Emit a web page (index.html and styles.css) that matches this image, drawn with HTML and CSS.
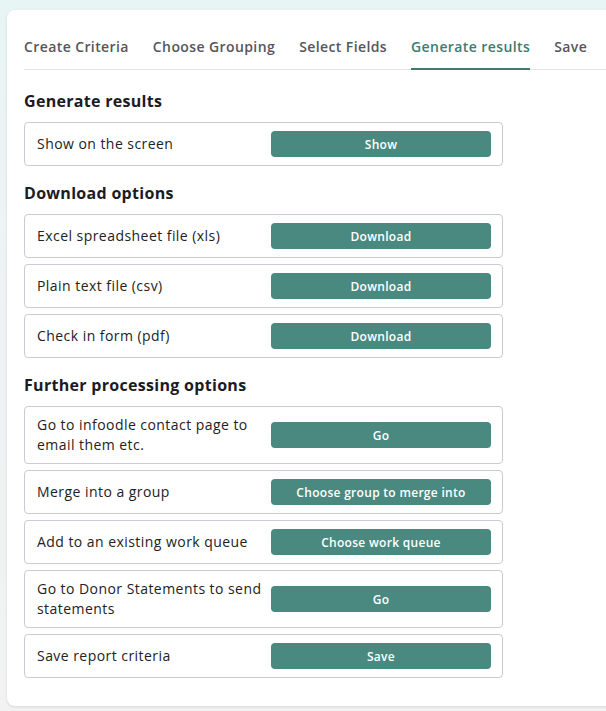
FILE: index.html
```html
<!DOCTYPE html>
<html lang="en">
<head>
    <meta charset="UTF-8">
    <meta name="viewport" content="width=device-width, initial-scale=1.0">
    <title>Generate results</title>
    <link rel="stylesheet" href="styles.css">
</head>
<body>
    <div class="report-card">
        <nav class="tabs">
            <a class="tab">Create Criteria</a>
            <a class="tab">Choose Grouping</a>
            <a class="tab">Select Fields</a>
            <a class="tab active">Generate results</a>
            <a class="tab">Save</a>
        </nav>

        <div class="content">
            <h3>Generate results</h3>
            <div class="option">
                <span>Show on the screen</span>
                <button>Show</button>
            </div>

            <h3>Download options</h3>
            <div class="option">
                <span>Excel spreadsheet file (xls)</span>
                <button>Download</button>
            </div>
            <div class="option">
                <span>Plain text file (csv)</span>
                <button>Download</button>
            </div>
            <div class="option">
                <span>Check in form (pdf)</span>
                <button>Download</button>
            </div>

            <h3>Further processing options</h3>
            <div class="option">
                <span>Go to infoodle contact page to email them etc.</span>
                <button>Go</button>
            </div>
            <div class="option">
                <span>Merge into a group</span>
                <button>Choose group to merge into</button>
            </div>
            <div class="option">
                <span>Add to an existing work queue</span>
                <button>Choose work queue</button>
            </div>
            <div class="option">
                <span>Go to Donor Statements to send statements</span>
                <button>Go</button>
            </div>
            <div class="option">
                <span>Save report criteria</span>
                <button>Save</button>
            </div>
        </div>
    </div>
</body>
</html>
```

FILE: styles.css
```css
html, body {
    height: 100%;
}

body {
    margin: 0;
    padding: 10px 0 0 7px;
    box-sizing: border-box;
    overflow: hidden;
    font-family: "Open Sans", Arial, sans-serif;
    color: #222;
    background: linear-gradient(to bottom, #e8f5f5 0%, #eef3f3 30%, #f2f2f2 100%);
}

.report-card {
    width: 640px;
    background-color: white;
    border-radius: 8px;
    box-shadow: 0 1px 3px rgba(0,0,0,0.12);
    padding: 27px 0 22px 17px;
    box-sizing: border-box;
}

.tabs {
    display: flex;
    gap: 24px;
    border-bottom: 1px solid #e4e4e4;
}

.tab {
    font-size: 14px;
    font-weight: 600;
    line-height: 20px;
    letter-spacing: 0.4px;
    color: #555560;
    padding-bottom: 11px;
    margin-bottom: -1px;
    border-bottom: 2px solid transparent;
    white-space: nowrap;
}

.tab.active {
    color: #3e7b72;
    border-bottom-color: #3e7b72;
}

.content {
    width: 479px;
}

h3 {
    font-size: 16px;
    font-weight: 700;
    line-height: 24px;
    letter-spacing: 0.3px;
    color: #1b1b24;
    margin: 15px 0 9px;
}

.tabs + .content h3:first-child {
    margin-top: 19px;
}

.option {
    display: grid;
    grid-template-columns: 1fr 220px;
    gap: 8px;
    align-items: center;
    border: 1px solid #c9ccd4;
    border-radius: 4px;
    padding: 8px 11px 8px 12px;
    margin-bottom: 6px;
    font-size: 14px;
    line-height: 20px;
    letter-spacing: 0.45px;
}

button {
    height: 26px;
    border: none;
    border-radius: 4px;
    background-color: #4a8980;
    color: white;
    font-family: inherit;
    font-size: 12px;
    font-weight: 600;
    letter-spacing: 0.3px;
    cursor: pointer;
}
```
